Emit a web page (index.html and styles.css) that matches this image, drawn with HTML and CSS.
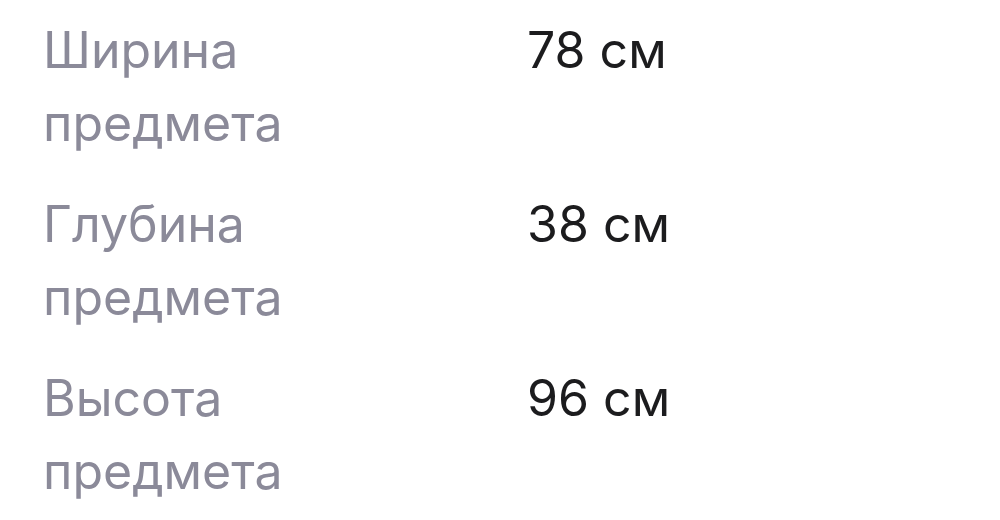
FILE: index.html
```html
<!DOCTYPE html>
<html lang="ru">
<head>
  <meta charset="UTF-8" />
  <meta name="viewport" content="width=device-width, initial-scale=1.0"/>
  <title>Характеристики</title>
  <link rel="stylesheet" href="styles.css">
</head>
<body>

<main class="specs">
  <div class="spec-row">
    <div class="spec-label">Ширина предмета</div>
    <div class="spec-value">78 см</div>
  </div>
  <div class="spec-row">
    <div class="spec-label">Глубина предмета</div>
    <div class="spec-value">38 см</div>
  </div>
  <div class="spec-row">
    <div class="spec-label">Высота предмета</div>
    <div class="spec-value">96 см</div>
  </div>
</main>

</body>
</html>
```

FILE: styles.css
```css
* {
  box-sizing: border-box;
}

body {
  margin: 0;
  background: #fff;
  font-family: Inter, "Noto Sans", sans-serif;
}

.specs {
  display: flex;
  flex-direction: column;
  gap: 28px;
  padding: 14px 0 0 43px;
}

.spec-row {
  display: grid;
  grid-template-columns: 300px 1fr;
  column-gap: 184px;
  font-size: 50px;
  line-height: 73px;
}

.spec-label {
  color: #8b8a99;
}

.spec-value {
  color: #1c1c1e;
}
```
